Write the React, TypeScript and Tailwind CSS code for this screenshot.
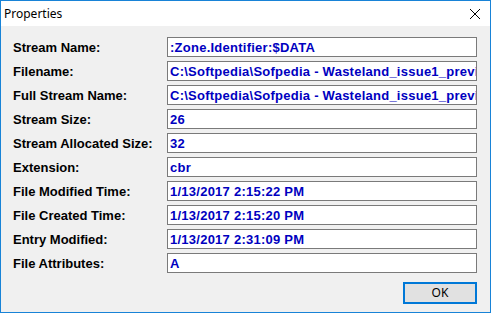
import React from 'react';

const ROWS: [string, string][] = [
  ['Stream Name:', ':Zone.Identifier:$DATA'],
  ['Filename:', 'C:\\Softpedia\\Sofpedia - Wasteland_issue1_preview.cbr'],
  ['Full Stream Name:', 'C:\\Softpedia\\Sofpedia - Wasteland_issue1_preview.cbr:Zone.Identifier:$DATA'],
  ['Stream Size:', '26'],
  ['Stream Allocated Size:', '32'],
  ['Extension:', 'cbr'],
  ['File Modified Time:', '1/13/2017 2:15:22 PM'],
  ['File Created Time:', '1/13/2017 2:15:20 PM'],
  ['Entry Modified:', '1/13/2017 2:31:09 PM'],
  ['File Attributes:', 'A'],
];

export default function App() {
  return (
    <div className="w-[491px] h-[313px] border border-[#1883d7] bg-[#f0f0f0] flex flex-col overflow-hidden">
      <div className="h-[25px] bg-white flex items-center justify-between pl-[3px] pr-[9px] shrink-0">
        <span className="text-[12px] text-black" style={{ fontFamily: '"Noto Sans", "Open Sans", sans-serif' }}>
          Properties
        </span>
        <svg width="12" height="12" viewBox="0 0 12 12" className="mt-[1px]">
          <path d="M1 1 L11 11 M11 1 L1 11" stroke="#000" strokeWidth="1" fill="none" />
        </svg>
      </div>

      <div
        className="flex flex-col pt-[11px] pl-[12px] pr-[13px]"
        style={{ fontFamily: '"Liberation Sans", Arial, sans-serif' }}
      >
        <div className="flex flex-col gap-[4px]">
          {ROWS.map(([label, value]) => (
            <div key={label} className="flex items-center h-[20px]">
              <div className="w-[154px] text-[13px] font-bold text-black leading-none">{label}</div>
              <div className="w-[310px] h-[20px] bg-white border border-[#7a7a7a] flex items-center pl-[2px] overflow-hidden">
                <span className="text-[13px] font-bold text-[#0000c0] whitespace-nowrap leading-none tracking-[0.25px]">
                  {value}
                </span>
              </div>
            </div>
          ))}
        </div>
        <div className="flex justify-end mt-[9px]">
          <button
            className="w-[74px] h-[22px] bg-[#e1e1e1] border-2 border-[#0078d7] text-[12px] text-black flex items-center justify-center"
            style={{ fontFamily: '"Noto Sans", "Open Sans", sans-serif' }}
          >
            OK
          </button>
        </div>
      </div>
    </div>
  );
}
